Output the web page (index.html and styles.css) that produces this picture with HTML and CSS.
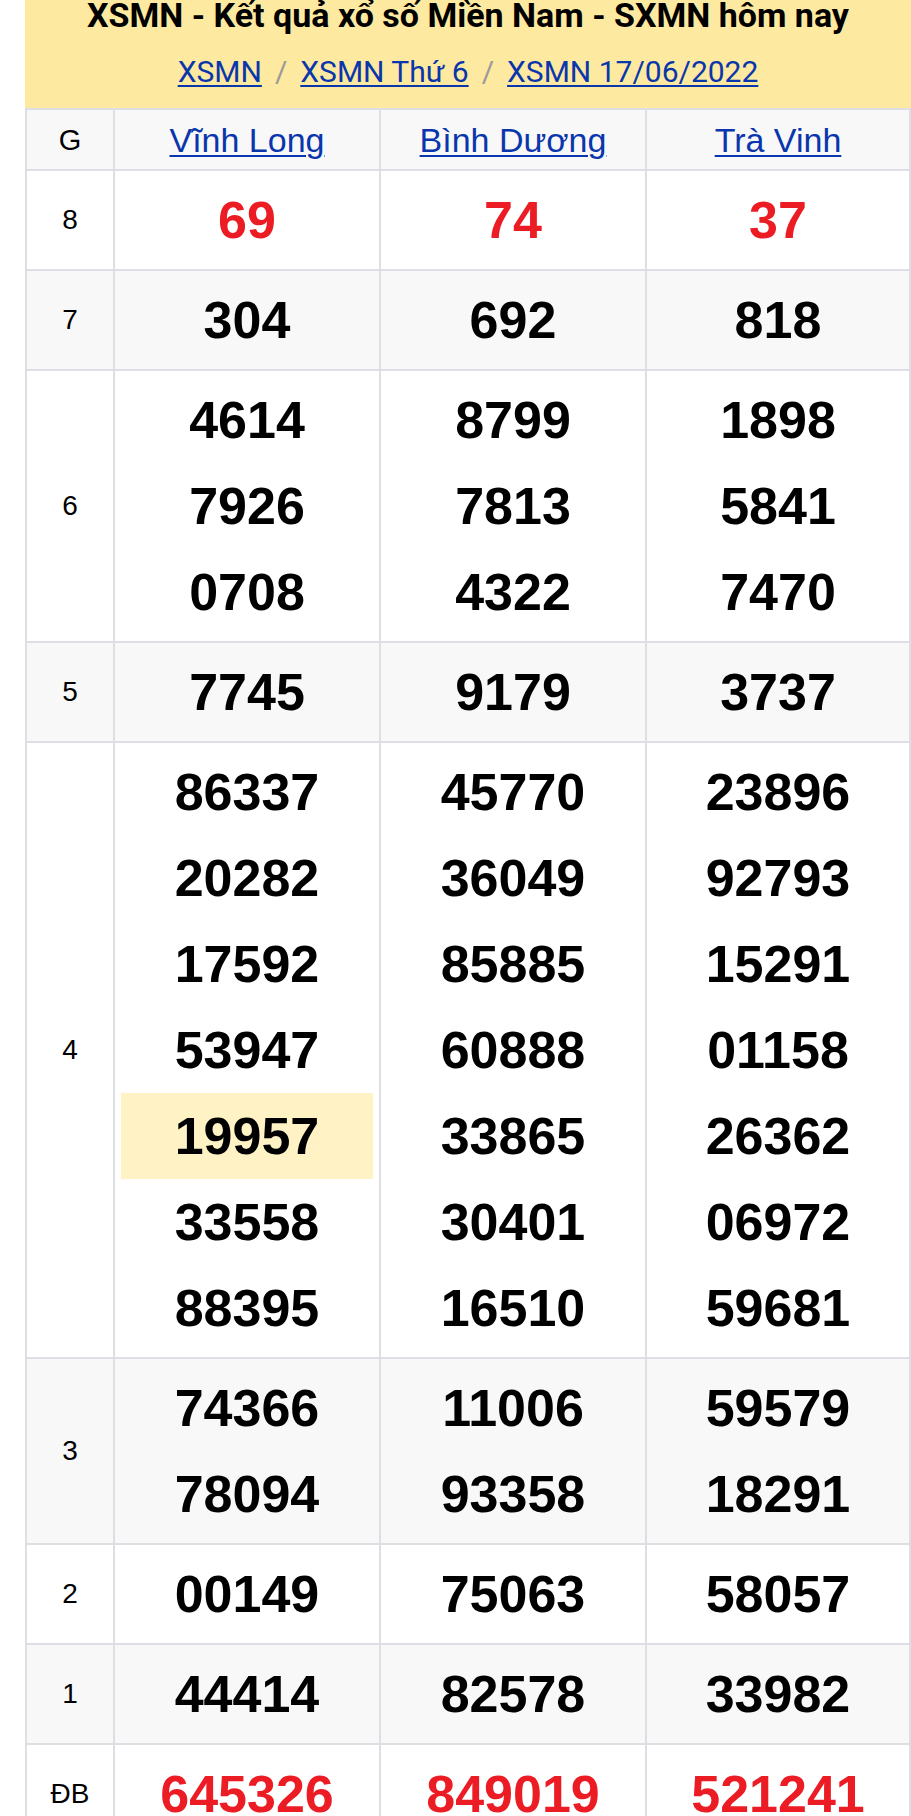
FILE: index.html
```html
<!DOCTYPE html>
<html lang="vi">
<head>
<meta charset="utf-8">
<title>XSMN - Kết quả xổ số Miền Nam</title>
<link rel="stylesheet" href="styles.css">
</head>
<body>
<div class="box">
  <div class="box-head">
    <h1 class="title">XSMN - Kết quả xổ số Miền Nam - SXMN hôm nay</h1>
    <div class="crumbs">
      <a href="#">XSMN</a><span class="sep">/</span><a href="#">XSMN Thứ 6</a><span class="sep">/</span><a href="#">XSMN 17/06/2022</a>
    </div>
  </div>
  <table class="results">
    <colgroup>
      <col class="c-g"><col class="c-p"><col class="c-p"><col class="c-last">
    </colgroup>
    <thead>
      <tr class="alt">
        <th class="lbl">G</th>
        <th><a href="#">Vĩnh Long</a></th>
        <th><a href="#">Bình Dương</a></th>
        <th><a href="#">Trà Vinh</a></th>
      </tr>
    </thead>
    <tbody>
      <tr>
        <td class="lbl">8</td>
        <td><div class="n red">69</div></td>
        <td><div class="n red">74</div></td>
        <td><div class="n red">37</div></td>
      </tr>
      <tr class="alt">
        <td class="lbl">7</td>
        <td><div class="n">304</div></td>
        <td><div class="n">692</div></td>
        <td><div class="n">818</div></td>
      </tr>
      <tr>
        <td class="lbl">6</td>
        <td><div class="n">4614</div><div class="n">7926</div><div class="n">0708</div></td>
        <td><div class="n">8799</div><div class="n">7813</div><div class="n">4322</div></td>
        <td><div class="n">1898</div><div class="n">5841</div><div class="n">7470</div></td>
      </tr>
      <tr class="alt">
        <td class="lbl">5</td>
        <td><div class="n">7745</div></td>
        <td><div class="n">9179</div></td>
        <td><div class="n">3737</div></td>
      </tr>
      <tr>
        <td class="lbl">4</td>
        <td><div class="n">86337</div><div class="n">20282</div><div class="n">17592</div><div class="n">53947</div><div class="n hl">19957</div><div class="n">33558</div><div class="n">88395</div></td>
        <td><div class="n">45770</div><div class="n">36049</div><div class="n">85885</div><div class="n">60888</div><div class="n">33865</div><div class="n">30401</div><div class="n">16510</div></td>
        <td><div class="n">23896</div><div class="n">92793</div><div class="n">15291</div><div class="n">01158</div><div class="n">26362</div><div class="n">06972</div><div class="n">59681</div></td>
      </tr>
      <tr class="alt">
        <td class="lbl">3</td>
        <td><div class="n">74366</div><div class="n">78094</div></td>
        <td><div class="n">11006</div><div class="n">93358</div></td>
        <td><div class="n">59579</div><div class="n">18291</div></td>
      </tr>
      <tr>
        <td class="lbl">2</td>
        <td><div class="n">00149</div></td>
        <td><div class="n">75063</div></td>
        <td><div class="n">58057</div></td>
      </tr>
      <tr class="alt">
        <td class="lbl">1</td>
        <td><div class="n">44414</div></td>
        <td><div class="n">82578</div></td>
        <td><div class="n">33982</div></td>
      </tr>
      <tr>
        <td class="lbl">ĐB</td>
        <td><div class="n red">645326</div></td>
        <td><div class="n red">849019</div></td>
        <td><div class="n red">521241</div></td>
      </tr>
    </tbody>
  </table>
</div>
</body>
</html>
```
FILE: styles.css
```css
html, body {
  margin: 0;
  padding: 0;
  background: #ffffff;
}

.box {
  margin-left: 25px;
  width: 886px;
}

.box-head {
  background: #fde99f;
  text-align: center;
  padding: 0 0 16px;
}

.title {
  margin: 0;
  font-family: Roboto, "Liberation Sans", sans-serif;
  font-weight: 700;
  font-size: 34px;
  line-height: 30px;
  color: #000000;
}

.crumbs {
  margin-top: 22px;
  font-family: Roboto, "Liberation Sans", sans-serif;
  font-size: 30px;
  line-height: 40px;
}

.crumbs a {
  color: #0a36ad;
  text-decoration: underline;
  text-decoration-thickness: 2px;
  text-underline-offset: 3px;
}

.crumbs .sep {
  color: #9a9a9a;
  margin: 0 13px;
}

.results {
  table-layout: fixed;
  border-collapse: separate;
  border-spacing: 2px;
  background: #dedfe4;
  width: 886px;
  font-family: "Liberation Sans", Arial, sans-serif;
}

.c-g { width: 86px; }
.c-p { width: 264px; }
.c-last { width: 262px; }

.results th,
.results td {
  background: #ffffff;
  text-align: center;
  vertical-align: middle;
  padding: 6px 6px;
}

.results tr.alt th,
.results tr.alt td {
  background: #f8f8f8;
}

.results th {
  height: 47px;
  font-weight: 400;
  font-size: 34px;
  line-height: 40px;
}

.results th a {
  color: #0a36ad;
  text-decoration: underline;
  text-decoration-thickness: 2px;
  text-underline-offset: 3px;
}

.results .lbl {
  font-size: 28px;
  font-weight: 400;
  color: #000000;
  padding: 0;
}

.results th.lbl {
  font-size: 29px;
}

.n {
  font-size: 52px;
  font-weight: 700;
  line-height: 86px;
  height: 86px;
  color: #000000;
}

.n.red {
  color: #ec1c24;
}

.n.hl {
  background: #fff3c5;
}
```
